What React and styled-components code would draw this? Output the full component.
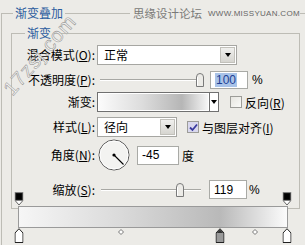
import React from "react";
import styled, { createGlobalStyle } from "styled-components";

const Global = createGlobalStyle`
  html, body { margin: 0; padding: 0; background: #ecebe7; }
  body { font-family: "Noto Sans CJK SC", "Liberation Sans", sans-serif; font-size: 12px; color: #000; }
  * { box-sizing: border-box; }
`;

const Panel = styled.div`
  position: relative;
  width: 305px;
  height: 245px;
  overflow: hidden;
  background: #ecebe7;
`;

const OuterBox = styled.fieldset`
  margin: 6px 0 0 1px;
  padding: 0;
  min-width: 0;
  border: none;
  border-top: 1px solid #bdbcb5;
  border-left: 1px solid #bdbcb5;
  height: 239px;
`;

const Legend = styled.legend`
  margin-left: ${(p) => p.$ml}px;
  padding: 0 2px;
  line-height: 14px;
  height: 14px;
  font-size: 12px;
  color: ${(p) => p.$color || "#2b5c9e"};
`;

const InnerBox = styled.fieldset`
  margin: 6px 0 0 9px;
  padding: 0;
  width: 289px;
  height: 183px;
  min-width: 0;
  border: 1px solid #bdbcb5;
`;

const Row = styled.div`
  display: flex;
  align-items: center;
  height: ${(p) => p.$h}px;
  margin-top: ${(p) => p.$mt}px;
`;

const Label = styled.label`
  flex: none;
  width: 83px;
  margin-right: 2px;
  text-align: right;
  white-space: nowrap;
  line-height: 14px;
`;

const Select = styled.div`
  flex: none;
  display: flex;
  width: ${(p) => p.$w}px;
  height: 20px;
  margin-left: ${(p) => p.$ml || 0}px;
  background: #fff;
  border: 1px solid #a6a6a2;
`;

const SelectText = styled.span`
  flex: 1;
  padding-left: 6px;
  line-height: 18px;
`;

const DropButton = styled.span`
  flex: none;
  width: 15px;
  margin: 1px;
  display: flex;
  align-items: center;
  justify-content: center;
  background: linear-gradient(#f0f0ee, #d6d5d0);
  border: 1px solid #c2c1bb;
`;

const Arrow = styled.span`
  width: 0;
  height: 0;
  border-left: 3px solid transparent;
  border-right: 3px solid transparent;
  border-top: 4px solid #000;
`;

const SliderWrap = styled.div`
  flex: none;
  position: relative;
  width: 108px;
  height: 14px;
  margin-left: ${(p) => p.$ml}px;
`;

const Track = styled.div`
  position: absolute;
  left: 0;
  top: 6px;
  width: 100px;
  height: 2px;
  border-top: 1px solid #a8a8a4;
  border-bottom: 1px solid #fff;
`;

const Thumb = styled.svg`
  position: absolute;
  top: 0;
`;

const Input = styled.div`
  flex: none;
  width: ${(p) => p.$w}px;
  height: ${(p) => p.$h || 18}px;
  margin-left: ${(p) => p.$ml}px;
  background: #fff;
  border: 1px solid #a9aaa6;
  padding-left: 4px;
  display: flex;
  align-items: center;
  font-family: "Liberation Sans", sans-serif;
  font-size: 12px;
`;

const Selected = styled.span`
  background: #a9c3e8;
  color: #1d3f94;
  padding: 0 1px;
  line-height: 14px;
`;

const Unit = styled.span`
  margin-left: ${(p) => p.$ml}px;
  font-family: ${(p) => (p.$latin ? '"Liberation Sans", sans-serif' : "inherit")};
`;

const Swatch = styled.div`
  flex: none;
  display: flex;
  width: 122px;
  height: 20px;
  border: 1px solid #707070;
  background: #fff;
`;

const SwatchFill = styled.div`
  flex: 1;
  margin: 1px;
  background: linear-gradient(to right, #fbfbfb 0%, #dcdcdc 40%, #b6b6b6 76%, #f6f6f6 100%);
`;

const SwatchArrow = styled.span`
  flex: none;
  width: 9px;
  display: flex;
  align-items: center;
  justify-content: center;
  border-left: 1px solid #707070;
  background: #fff;
`;

const Check = styled.span`
  flex: none;
  width: 12px;
  height: 12px;
  margin-left: ${(p) => p.$ml}px;
  border: 1px solid #9c9c98;
  background: ${(p) => (p.$on ? "#d9d8ee" : "linear-gradient(135deg, #e6e5e0, #fafaf8)")};
  display: flex;
  align-items: center;
  justify-content: center;
`;

const CheckText = styled.span`
  margin-left: 3px;
  white-space: nowrap;
`;

const Dial = styled.svg`
  flex: none;
  margin-left: 1px;
`;

const Editor = styled.div`
  margin: -17px 0 0 17px;
  width: 268px;
  position: relative;
  background: transparent;
`;

const StopLane = styled.div`
  position: relative;
  height: ${(p) => p.$h}px;
`;

const StopMark = styled.svg`
  position: absolute;
  top: ${(p) => p.$top || 0}px;
  transform: translateX(-50%);
`;

const Bar = styled.div`
  height: 22px;
  border: 1px solid #9a9a9a;
  background: linear-gradient(to right, #f6f6f6 0%, #dadada 38%, #b9b9b9 75%, #fbfbfb 100%);
  margin: 0 -1px;
`;

const HeaderMark = styled.div`
  position: absolute;
  left: 130px;
  top: 5px;
  padding-left: 3px;
  height: 16px;
  display: flex;
  align-items: center;
  gap: 6px;
  background: #ecebe7;
  color: #7a7a78;
  white-space: nowrap;
`;

const MarkCn = styled.span`
  font-size: 11.5px;
  letter-spacing: 0;
`;

const MarkEn = styled.span`
  font-family: "Liberation Sans", sans-serif;
  font-size: 8px;
  letter-spacing: 0.3px;
  color: #666;
`;

const Diagonal = styled.span`
  position: absolute;
  left: 40px;
  top: 55px;
  transform: translate(-50%, -50%) rotate(-49deg);
  font-family: "Liberation Sans", sans-serif;
  font-size: 20px;
  letter-spacing: 1px;
  color: rgba(250, 250, 250, 0.8);
  -webkit-text-stroke: 0.6px #9a9a98;
  white-space: nowrap;
  pointer-events: none;
`;

const TopStop = ({ left }) => (
  <StopMark width="9" height="14" viewBox="0 0 9 14" style={{ left: `${left}%` }}>
    <rect x="0.5" y="0.5" width="8" height="8" fill="#111" stroke="#808080" />
    <rect x="2" y="2" width="5" height="5" fill="#000" />
    <path d="M1 9 L4.5 13 L8 9" fill="#fff" stroke="#666" />
  </StopMark>
);

const BottomStop = ({ left, fill, head }) => (
  <StopMark width="9" height="15" viewBox="0 0 9 15" style={{ left: `${left}%` }}>
    <path d="M4.5 0.7 L8.5 5 L8.5 14.5 L0.5 14.5 L0.5 5 Z" fill={fill} stroke="#222" />
    {head && <path d="M4.5 1.5 L7.7 5 L1.3 5 Z" fill="#333" />}
  </StopMark>
);

const Mid = ({ left }) => (
  <StopMark $top={1} width="6" height="6" viewBox="0 0 6 6" style={{ left: `${left}%` }}>
    <path d="M3 0.5 L5.5 3 L3 5.5 L0.5 3 Z" fill="#fff" stroke="#777" />
  </StopMark>
);

const Slider = ({ value, min, max, ml }) => {
  const pos = ((value - min) / (max - min)) * 100;
  return (
    <SliderWrap $ml={ml}>
      <Track />
      <Thumb width="8" height="14" viewBox="0 0 8 14" style={{ left: `${pos - 4}px` }}>
        <path d="M0.5 13.5 V4 A3.5 3.5 0 0 1 7.5 4 V13.5 Z" fill="#ecebe7" stroke="#7a7a7a" />
        <path d="M1.5 12.5 V4.2" stroke="#fff" />
      </Thumb>
    </SliderWrap>
  );
};

export default function App() {
  return (
    <Panel>
      <Global />
      <OuterBox>
        <Legend $ml={11}>渐变叠加</Legend>
        <InnerBox>
          <Legend $ml={13}>渐变</Legend>
          <Row $h={20} $mt={5}>
            <Label>混合模式(<u>O</u>):</Label>
            <Select $w={140}>
              <SelectText>正常</SelectText>
              <DropButton><Arrow /></DropButton>
            </Select>
          </Row>
          <Row $h={20} $mt={5}>
            <Label>不透明度(<u>P</u>):</Label>
            <Slider value={100} min={0} max={100} ml={3} />
            <Input $w={38} $ml={2}><Selected>100</Selected></Input>
            <Unit $ml={4} $latin>%</Unit>
          </Row>
          <Row $h={20} $mt={2}>
            <Label>渐变:</Label>
            <Swatch>
              <SwatchFill />
              <SwatchArrow><Arrow /></SwatchArrow>
            </Swatch>
            <Check $ml={11} />
            <CheckText>反向(<u>R</u>)</CheckText>
          </Row>
          <Row $h={20} $mt={5}>
            <Label>样式(<u>L</u>):</Label>
            <Select $w={80}>
              <SelectText>径向</SelectText>
              <DropButton><Arrow /></DropButton>
            </Select>
            <Check $ml={10} $on>
              <svg width="9" height="9" viewBox="0 0 9 9">
                <path d="M1 4.5 L3.5 7 L8 1.5" fill="none" stroke="#3a3a9e" strokeWidth="1.8" />
              </svg>
            </Check>
            <CheckText>与图层对齐(<u>I</u>)</CheckText>
          </Row>
          <Row $h={32} $mt={2}>
            <Label>角度(<u>N</u>):</Label>
            <Dial width="32" height="32" viewBox="0 0 32 32">
              <circle cx="16" cy="16" r="15" fill="#f3f3f1" stroke="#555" />
              <circle cx="16" cy="16" r="14" fill="none" stroke="#fff" />
              <line x1="16" y1="16" x2="25.5" y2="25.5" stroke="#000" strokeWidth="1.1" />
              <circle cx="16" cy="16" r="1.6" fill="#000" />
            </Dial>
            <Input $w={42} $h={19} $ml={7}>-45</Input>
            <Unit $ml={3}>度</Unit>
          </Row>
          <Row $h={19} $mt={9}>
            <Label>缩放(<u>S</u>):</Label>
            <Slider value={119} min={1} max={150} ml={4} />
            <Input $w={38} $h={19} $ml={0}>119</Input>
            <Unit $ml={2} $latin>%</Unit>
          </Row>
        </InnerBox>
        <Editor>
          <StopLane $h={14}>
            <TopStop left={0} />
            <TopStop left={100} />
          </StopLane>
          <Bar />
          <StopLane $h={16}>
            <BottomStop left={0} fill="#fff" />
            <Mid left={38} />
            <BottomStop left={75} fill="#9a9a9a" head />
            <Mid left={88} />
            <BottomStop left={100} fill="#fff" />
          </StopLane>
        </Editor>
      </OuterBox>
      <HeaderMark>
        <MarkCn>思缘设计论坛</MarkCn>
        <MarkEn>WWW.MISSYUAN.COM</MarkEn>
      </HeaderMark>
      <Diagonal>17zsj.com</Diagonal>
    </Panel>
  );
}
